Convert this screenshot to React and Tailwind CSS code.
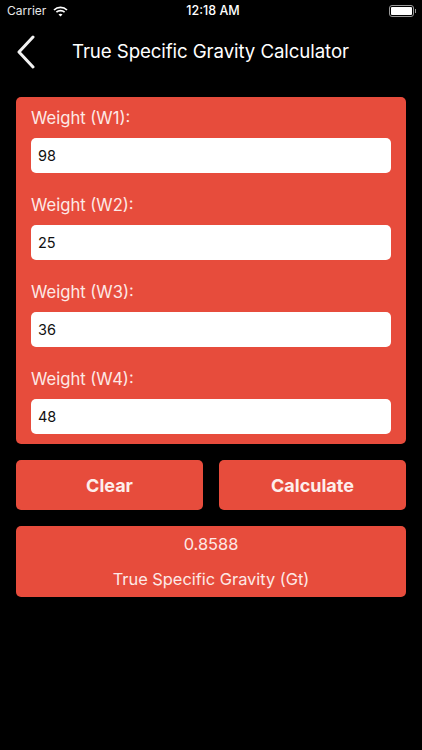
import React from "react";

const fields = [
  { label: "Weight (W1):", value: "98" },
  { label: "Weight (W2):", value: "25" },
  { label: "Weight (W3):", value: "36" },
  { label: "Weight (W4):", value: "48" },
];

const StatusBar = () => (
  <div className="h-[22px] flex items-center justify-between pl-[7px] pr-[6px] text-white text-[12.5px] relative">
    <div className="flex items-center gap-[7px]">
      <span className="text-[#e8e8e8] text-[12px]">Carrier</span>
      <svg width="15" height="11" viewBox="0 0 15 11" fill="none" stroke="white" strokeWidth="1.7">
        <path d="M1 4 C4.6 .6 10.4 .6 14 4" />
        <path d="M3.4 6.2 C5.6 4.2 9.4 4.2 11.6 6.2" />
        <path d="M7.5 10.6 L5.5 8.4 C6.6 7.5 8.4 7.5 9.5 8.4 Z" fill="white" stroke="none" />
      </svg>
    </div>
    <span className="absolute left-0 right-0 pl-[4px] text-center font-medium">12:18 AM</span>
    <div className="flex items-center">
      <div className="w-[25px] h-[12px] border border-[#9a9a9a] rounded-[3px] p-[1px]">
        <div className="w-full h-full bg-white rounded-[1px]"></div>
      </div>
      <div className="w-[1px] h-[4px] bg-[#9a9a9a] ml-[1px]"></div>
    </div>
  </div>
);

const App = () => {
  return (
    <div className="w-[422px] h-[750px] bg-black overflow-hidden font-['Inter','Liberation_Sans',sans-serif]">
      <StatusBar />

      <div className="h-[60px] flex items-center pl-[17px] text-white">
        <svg width="18" height="34" viewBox="0 0 18 34" fill="none" stroke="#f2f2f2" strokeWidth="3" strokeLinecap="round" strokeLinejoin="round">
          <path d="M16 2 L2 17 L16 32" />
        </svg>
        <h1 className="ml-[37px] text-[18.7px] tracking-[-0.1px]">True Specific Gravity Calculator</h1>
      </div>

      <div className="mx-4 mt-[15px] flex flex-col gap-4">
        <div className="bg-[#e74c3c] rounded-[5px] px-[15px] pt-[9px] pb-[10px] flex flex-col gap-[20px]">
          {fields.map((f) => (
            <div key={f.label}>
              <div className="h-[24px] leading-[24px] text-[16.6px] text-[#fde9e6]">{f.label}</div>
              <div className="mt-[8px] h-[35px] bg-white rounded-[5px] pl-[7px] flex items-center text-[14.5px] text-[#111]">
                {f.value}
              </div>
            </div>
          ))}
        </div>

        <div className="flex gap-4">
          <button className="flex-1 h-[50px] bg-[#e74c3c] rounded-[5px] text-[#fdeeec] text-[18px] font-bold">Clear</button>
          <button className="flex-1 h-[50px] bg-[#e74c3c] rounded-[5px] text-[#fdeeec] text-[18px] font-bold">Calculate</button>
        </div>

        <div className="h-[71px] bg-[#e74c3c] rounded-[5px] text-[#fde9e6] text-[16.4px] text-center pt-[8px]">
          <div className="leading-[21px]">0.8588</div>
          <div className="mt-[14px] leading-[21px]">True Specific Gravity (Gt)</div>
        </div>
      </div>
    </div>
  );
};

export default App;
